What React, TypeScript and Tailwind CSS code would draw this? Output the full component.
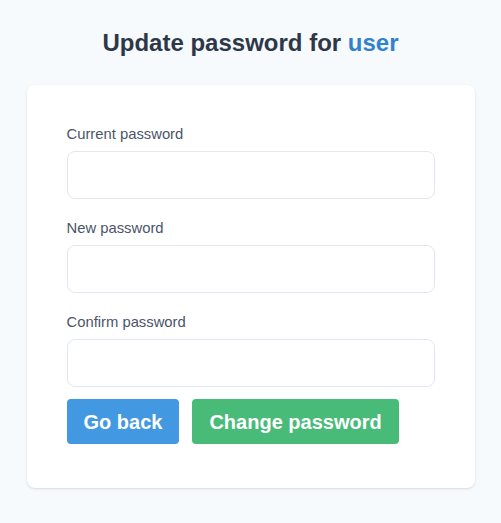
import { ReactNode } from 'react'

function Field({ label, last, children }: { label: string; last?: boolean; children?: ReactNode }) {
  return (
    <div className={last ? 'mb-3' : 'mb-[19px]'}>
      <label className="mb-[7px] block h-5 text-[14.8px] leading-5 text-[#4a5568]">{label}</label>
      <input
        type="password"
        className="block h-12 w-full rounded-lg border border-[#e2e8f0] bg-white px-3 outline-none"
      />
      {children}
    </div>
  )
}

export default function App() {
  return (
    <div className="min-h-[523px] bg-[#f7fafc] pt-[27px] font-['Liberation_Sans',Arial,sans-serif]">
      <h1 className="mb-[26px] text-center text-2xl leading-8 font-bold text-[#2d3748]">
        Update password for <span className="text-[#3182ce]">user</span>
      </h1>

      <div className="mx-auto max-w-md rounded-lg bg-white px-10 pt-[39px] pb-[44px] shadow-sm">
        <Field label="Current password" />
        <Field label="New password" />
        <Field label="Confirm password" last />

        <div className="flex gap-[13px]">
          <button className="h-[45px] rounded bg-[#4299e1] px-[17px] text-xl font-bold text-white">
            Go back
          </button>
          <button className="h-[45px] rounded bg-[#48bb78] px-[17px] text-xl font-bold text-white">
            Change password
          </button>
        </div>
      </div>
    </div>
  )
}
